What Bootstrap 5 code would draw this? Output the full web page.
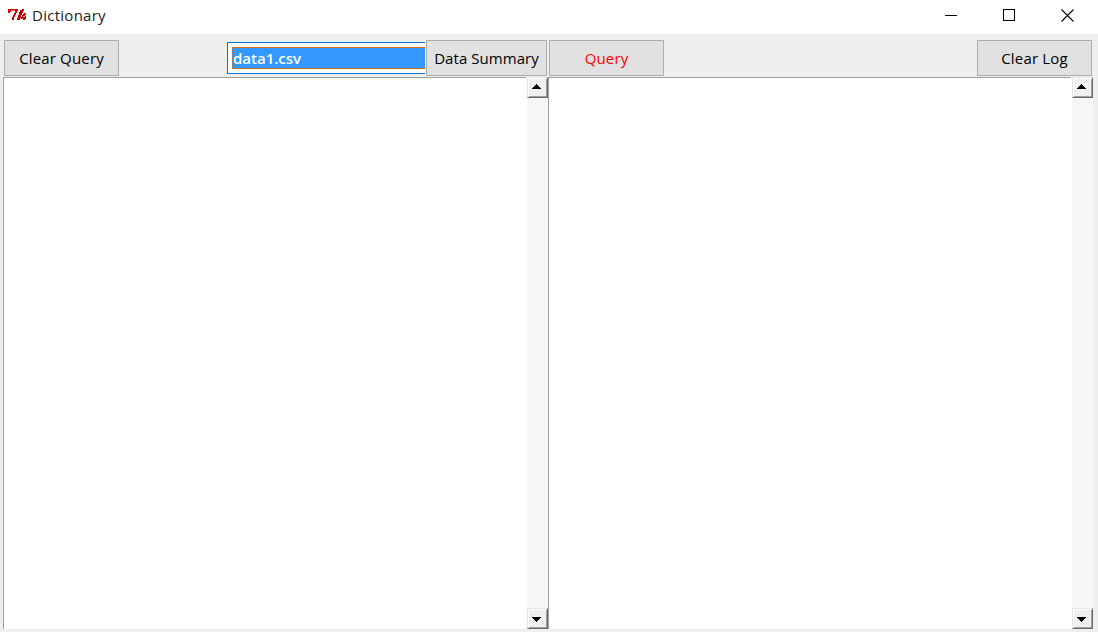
<!DOCTYPE html>
<html lang="en">
<head>
<meta charset="utf-8">
<title>Dictionary</title>
<link href="https://cdn.jsdelivr.net/npm/bootstrap@5.3.0/dist/css/bootstrap.min.css" rel="stylesheet">
<style>
body{background:#efefef;color:#000;font:15px/20px "Open Sans","Noto Sans",sans-serif}
.titlebar{height:34px;background:#fff;color:#222;padding:0 24px 4px 8px}
.titlebar .caption{font-size:15px;letter-spacing:.27px;margin-left:5px}
.winicons{gap:45px}
.toolbar{height:43px;padding:6px 6px 1px 4px}
.tk{height:36px;width:115px;padding:0;border:1px solid #adadad;border-radius:0;background:#e1e1e1;color:#000;font-size:15px;line-height:20px;white-space:nowrap;letter-spacing:.16px}
.tk.semi{font-weight:500}
.tk.summary{width:121px;margin-right:2px;margin-left:1px;letter-spacing:.06px}
.tk.query{color:#f00}
.combo{width:198px;height:32px;margin:2px 0 2px 108px;border:1px solid #0078d7;border-right:0;background:#fff;padding:4px 0 4px 4px}
.combo div{height:22px;background:#39f;border:1px dotted #c86414;border-right:0;color:#fff;font-weight:600;line-height:20px;font-size:15px}
.panes{height:552px;margin-left:3px;width:1090px}
.pane{width:545px;border-left:1px solid #a0a0a0;background:#fff}
.sheet{border-top:1px solid #a0a0a0}
.scroller{width:21px;margin-left:1px;background:repeating-conic-gradient(#efefef 0 25%,#fff 0 50%) 0 0/2px 2px}
.arrow{width:21px;height:21px;background:#efefef;border:1px solid;border-color:#e3e3e3 #696969 #696969 #e3e3e3;box-shadow:inset 1px 1px #fff,inset -1px -1px #a0a0a0;padding:6px 0 0 4px}
.arrow.down{padding-top:8px}
.arrow svg{display:block}
</style>
</head>
<body class="vh-100 overflow-hidden">
<header class="titlebar d-flex align-items-center justify-content-between">
 <div class="d-flex align-items-center">
  <svg width="19" height="16" viewBox="0 0 19 16" shape-rendering="crispEdges" fill="none"><path d="M0 2h10v2H9v2H8v2H7v2H6v3H4v-3h1V8h1V6h1V4H3v1H2v1H0z" fill="#d80000"/><path d="M3 3h4v1H3z" fill="#f66"/><path d="M14 2h2v2h-1v2h-1v2h-1v2h1V8h1V7h1V6h2v2h-1v1h1v3h-1v1h-2v-1h-2v-1h-1v2H9v-2h1V8h1V5h1V3h2z" fill="#c80000"/><path d="M15 9h2v1h-2z" fill="#ffb0b0"/><path d="M14 11h1v1h-1z" fill="#e66"/></svg>
  <span class="caption">Dictionary</span>
 </div>
 <div class="winicons d-flex align-items-center" role="group">
  <svg width="13" height="13" shape-rendering="crispEdges"><path d="M0 6.5h12" stroke="#000"/></svg>
  <svg width="13" height="13" shape-rendering="crispEdges"><path d="M.5.5h11v11H.5z" fill="none" stroke="#000"/></svg>
  <svg width="13" height="13"><path d="M.5.5l12 12M12.5.5l-12 12" stroke="#000" stroke-width="1.1"/></svg>
 </div>
</header>
<nav class="toolbar d-flex align-items-start">
 <button class="btn tk semi">Clear Query</button>
 <div class="combo"><div>data1.csv</div></div>
 <button class="btn tk summary">Data Summary</button>
 <button class="btn tk query">Query</button>
 <button class="btn tk semi ms-auto">Clear Log</button>
</nav>
<main class="panes d-flex">
 <section class="pane d-flex">
  <div class="sheet flex-grow-1"></div>
  <div class="scroller d-flex flex-column justify-content-between">
   <div class="arrow"><svg width="9" height="5" shape-rendering="crispEdges"><path d="M4 0h1v1h1v1h1v1h1v1h1v1H0V4h1V3h1V2h1V1h1z"/></svg></div>
   <div class="arrow down"><svg width="9" height="5" shape-rendering="crispEdges"><path d="M0 0h9v1H8v1H7v1H6v1H5v1H4V4H3V3H2V2H1V1H0z"/></svg></div>
  </div>
 </section>
 <section class="pane d-flex">
  <div class="sheet flex-grow-1"></div>
  <div class="scroller d-flex flex-column justify-content-between">
   <div class="arrow"><svg width="9" height="5" shape-rendering="crispEdges"><path d="M4 0h1v1h1v1h1v1h1v1h1v1H0V4h1V3h1V2h1V1h1z"/></svg></div>
   <div class="arrow down"><svg width="9" height="5" shape-rendering="crispEdges"><path d="M0 0h9v1H8v1H7v1H6v1H5v1H4V4H3V3H2V2H1V1H0z"/></svg></div>
  </div>
 </section>
</main>
<script src="https://cdn.jsdelivr.net/npm/bootstrap@5.3.0/dist/js/bootstrap.bundle.min.js"></script>
</body>
</html>
